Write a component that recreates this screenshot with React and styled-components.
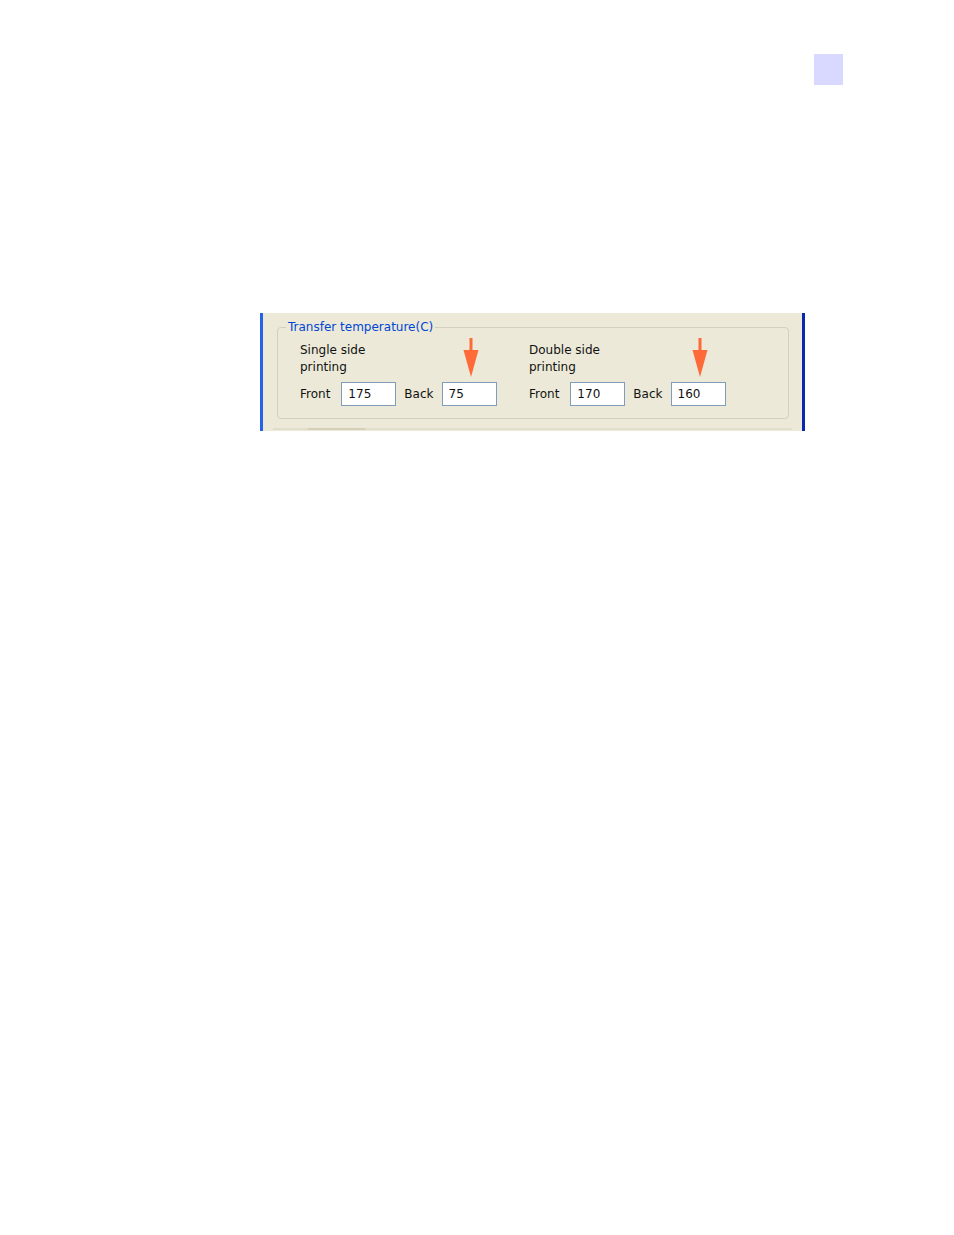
import React from "react";
import styled, { createGlobalStyle } from "styled-components";

const Global = createGlobalStyle`
  html, body { margin: 0; padding: 0; background: #ffffff; }
  body { font-family: "DejaVu Sans", Verdana, sans-serif; }
  * { box-sizing: border-box; }
`;

const Page = styled.div`
  width: 954px;
  height: 1235px;
  background: #ffffff;
  padding-top: 54px;
`;

const TopRow = styled.div`
  display: flex;
  justify-content: flex-end;
  padding-right: 111px;
`;

const Marker = styled.div`
  width: 29px;
  height: 31px;
  background: #d9d9ff;
`;

const Panel = styled.div`
  margin: 228px 0 0 260px;
  width: 545px;
  height: 118px;
  background: #ece9d8;
  border-left: 3px solid #2462e6;
  border-right: 3px solid #0a28ae;
  padding: 7px 0 0 14px;
  display: flex;
  flex-direction: column;
  overflow: hidden;
`;

const Group = styled.fieldset`
  margin: 0;
  width: 512px;
  height: 99px;
  border: 1px solid #d2d0c0;
  border-radius: 4px;
  padding: 0 0 0 22px;
  min-width: 0;
`;

const Legend = styled.legend`
  margin-left: -14px;
  padding: 0 2px;
  font-size: 12px;
  line-height: 14px;
  color: #0046d5;
`;

const Columns = styled.div`
  display: grid;
  grid-template-columns: 229px 1fr;
  padding-top: 8px;
`;

const Column = styled.div`
  display: flex;
  flex-direction: column;
  gap: 6px;
`;

const Caption = styled.div`
  font-size: 12px;
  line-height: 17px;
  color: #111111;
`;

const Row = styled.div`
  display: flex;
  align-items: center;
  gap: 8px;
`;

const Label = styled.span`
  font-size: 12px;
  color: #111111;
  margin-right: ${(p) => (p.$wide ? 3 : 0)}px;
`;

const Field = styled.div`
  position: relative;
`;

const Input = styled.input`
  width: 55px;
  height: 24px;
  border: 1px solid #7f9db9;
  background: #ffffff;
  padding: 0 0 0 6px;
  margin: 0;
  font-family: "DejaVu Sans", Verdana, sans-serif;
  font-size: 12px;
  color: #111111;
  outline: none;
  display: block;
`;

const Arrow = styled.svg`
  position: absolute;
  left: 21px;
  top: -44px;
  width: 16px;
  height: 40px;
  overflow: visible;
`;

const Foot = styled.div`
  margin: 9px 0 0 -4px;
  width: 519px;
  height: 3px;
  border-top: 2px solid #e1decd;
  display: flex;
`;

const FootTab = styled.div`
  margin: -2px 0 0 35px;
  width: 57px;
  height: 2px;
  background: #d3cfb9;
`;

const ArrowMark = () => (
  <Arrow viewBox="0 0 16 40">
    <rect x="6.5" y="0" width="3" height="14" fill="#ff6a39" />
    <polygon points="0.5,12 15.5,12 8,39" fill="#ff6a39" />
  </Arrow>
);

const Side = ({ line1, front, back }) => (
  <Column>
    <Caption>
      {line1}
      <br />
      printing
    </Caption>
    <Row>
      <Label $wide>Front</Label>
      <Field>
        <Input defaultValue={front} />
      </Field>
      <Label>Back</Label>
      <Field>
        <Input defaultValue={back} />
        <ArrowMark />
      </Field>
    </Row>
  </Column>
);

export default function App() {
  return (
    <Page>
      <Global />
      <TopRow>
        <Marker />
      </TopRow>
      <Panel>
        <Group>
          <Legend>Transfer temperature(C)</Legend>
          <Columns>
            <Side line1="Single side" front="175" back="75" />
            <Side line1="Double side" front="170" back="160" />
          </Columns>
        </Group>
        <Foot>
          <FootTab />
        </Foot>
      </Panel>
    </Page>
  );
}
